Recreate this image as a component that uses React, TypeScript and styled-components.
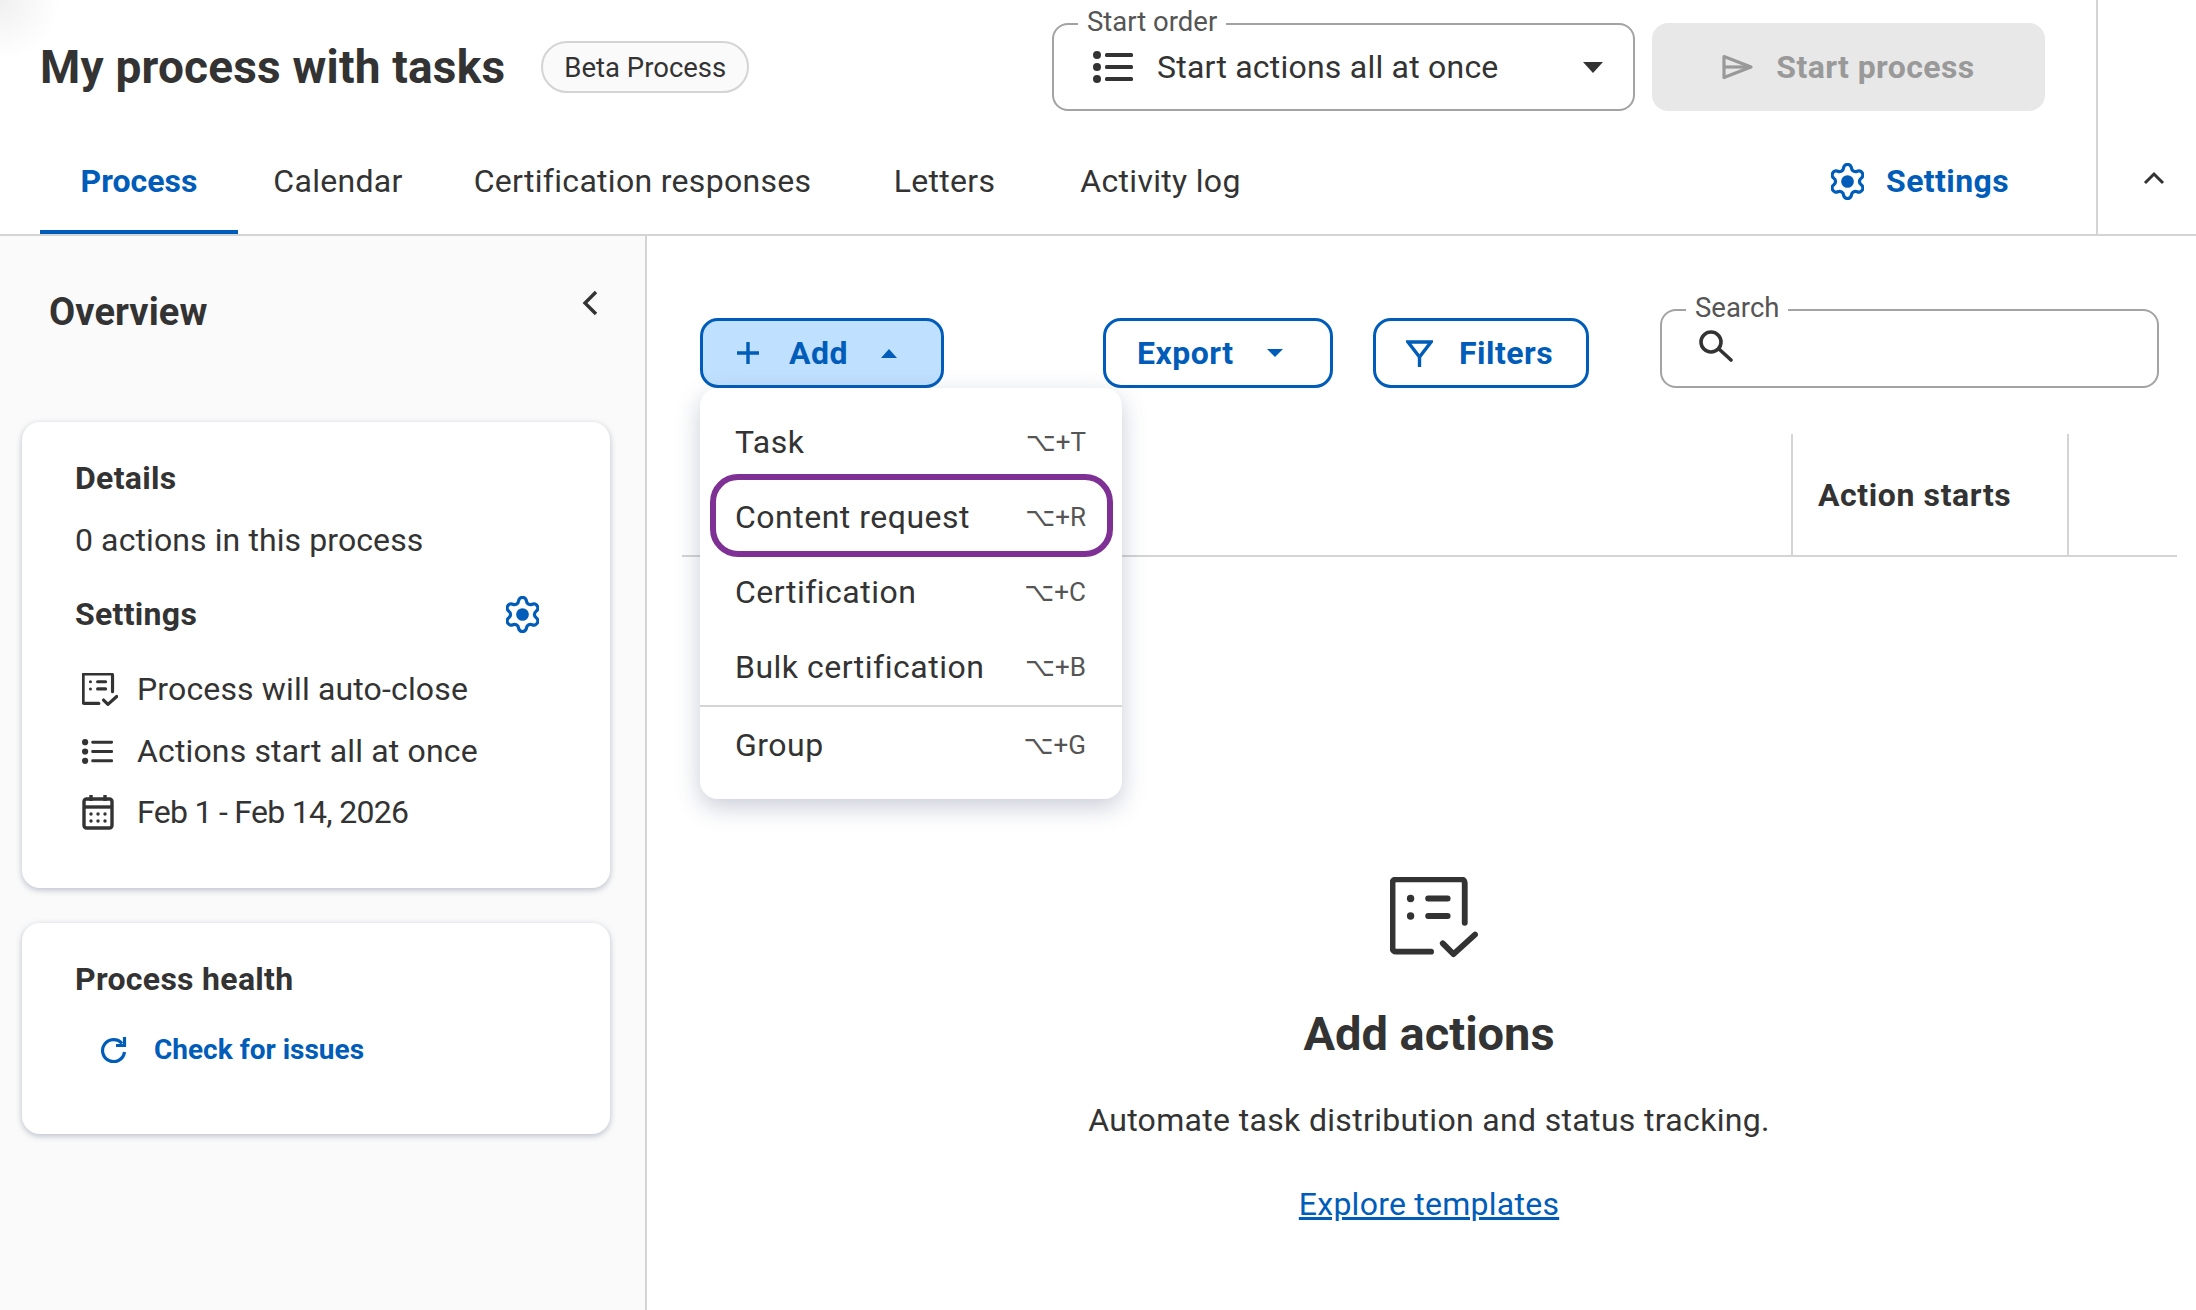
import { createGlobalStyle, styled } from "styled-components";

const BLUE = "#005cb9";
const INK = "#333333";

const GlobalStyle = createGlobalStyle`
  html, body {
    margin: 0;
    padding: 0;
    background: #fff;
  }
  body {
    font-family: Roboto, "Noto Sans", "DejaVu Sans", sans-serif;
    color: ${INK};
  }
  * {
    box-sizing: border-box;
  }
`;

const GearIcon = () => (
  <svg width="33" height="37" viewBox="2.4 1.2 19.2 21.6" fill="none" stroke={BLUE} strokeWidth="1.9" strokeLinejoin="round">
    <path d="M9.671 4.136a2.34 2.34 0 0 1 4.659 0 2.34 2.34 0 0 0 3.319 1.915 2.34 2.34 0 0 1 2.33 4.033 2.34 2.34 0 0 0 0 3.831 2.34 2.34 0 0 1-2.33 4.033 2.34 2.34 0 0 0-3.319 1.915 2.34 2.34 0 0 1-4.659 0 2.34 2.34 0 0 0-3.32-1.915 2.34 2.34 0 0 1-2.33-4.033 2.34 2.34 0 0 0 0-3.831A2.34 2.34 0 0 1 6.35 6.051a2.34 2.34 0 0 0 3.319-1.915" />
    <circle cx="12" cy="12" r="3.7" fill={BLUE} stroke="none" />
  </svg>
);

const ListIcon = ({ width, height }: { width: number; height: number }) => (
  <svg width={width} height={height} viewBox="0 0 40 32" fill={INK}>
    <circle cx="4" cy="4" r="4" />
    <circle cx="4" cy="16" r="4" />
    <circle cx="4" cy="28" r="4" />
    <rect x="12" y="2" width="28" height="4" rx="1.5" />
    <rect x="12" y="14" width="28" height="4" rx="1.5" />
    <rect x="12" y="26" width="28" height="4" rx="1.5" />
  </svg>
);

const TaskListIcon = ({ width, height, strokeWidth }: { width: number; height: number; strokeWidth: number }) => (
  <svg width={width} height={height} viewBox="0 0 90 83" fill="none" stroke={INK} strokeWidth={strokeWidth} strokeLinecap="round" strokeLinejoin="round">
    <path d="M42 76.5 H6 a3.5 3.5 0 0 1 -3.5 -3.5 V6 a3.5 3.5 0 0 1 3.5 -3.5 H73 a3.5 3.5 0 0 1 3.5 3.5 V47" />
    <path d="M54 68 L65 79 L87 59" />
    <path d="M39 22 H59 M39 40 H59" />
    <circle cx="21" cy="22" r="3.8" fill={INK} stroke="none" />
    <circle cx="21" cy="40" r="3.8" fill={INK} stroke="none" />
  </svg>
);

const CalendarIcon = () => (
  <svg width="32" height="36" viewBox="0 0 32 36" fill="none" stroke={INK} strokeWidth="3.4">
    <rect x="2" y="5" width="28" height="29" rx="2.5" />
    <path d="M2 13 H30" />
    <path d="M9 1 V7 M23 1 V7" />
    <g fill={INK} stroke="none">
      <circle cx="9" cy="20" r="1.7" />
      <circle cx="16" cy="20" r="1.7" />
      <circle cx="23" cy="20" r="1.7" />
      <circle cx="9" cy="27" r="1.7" />
      <circle cx="16" cy="27" r="1.7" />
      <circle cx="23" cy="27" r="1.7" />
    </g>
  </svg>
);

const SendIcon = () => (
  <svg width="32" height="26" viewBox="0 0 32 26" fill="none" stroke="#999" strokeWidth="3.2" strokeLinejoin="round">
    <path d="M2 2.5 L29 13 L2 23.5 Z" />
    <path d="M3 13 H29" />
  </svg>
);

const FilterIcon = () => (
  <svg width="27" height="27" viewBox="0 0 27 27" fill="none" stroke={BLUE} strokeWidth="3.4" strokeLinejoin="miter">
    <path d="M2 2 H25 L13.5 17 Z" />
    <path d="M13.5 16 V27" />
  </svg>
);

const SearchIcon = () => (
  <svg width="34" height="32" viewBox="0 0 34 32" fill="none" stroke={INK} strokeWidth="3.6" strokeLinecap="round">
    <circle cx="12" cy="12" r="10" />
    <path d="M20 19 L32 30" />
  </svg>
);

const RefreshIcon = () => (
  <svg width="28" height="27" viewBox="0 0 28 27" fill="none" stroke={BLUE} strokeWidth="3.2">
    <path d="M22 7.5 A11 11 0 1 0 24.5 16" />
    <path d="M24.5 1 V9.5 H16" />
  </svg>
);

const PlusIcon = () => (
  <svg width="22" height="22" viewBox="0 0 22 22" stroke={BLUE} strokeWidth="3.4">
    <path d="M11 0 V22 M0 11 H22" />
  </svg>
);

const Caret = styled.span<{ $up?: boolean; $color?: string; $width?: number }>`
  display: inline-block;
  width: 0;
  height: 0;
  border-left: ${(p) => (p.$width ?? 18) / 2}px solid transparent;
  border-right: ${(p) => (p.$width ?? 18) / 2}px solid transparent;
  ${(p) => (p.$up ? "border-bottom" : "border-top")}: ${(p) => ((p.$width ?? 18) * 5) / 9}px solid ${(p) => p.$color ?? BLUE};
`;

const Gap = styled.span<{ $width: number }>`
  flex: none;
  width: ${(p) => p.$width}px;
`;

const Page = styled.div`
  width: 2196px;
  height: 1310px;
  display: flex;
  flex-direction: column;
  overflow: hidden;
  background: radial-gradient(circle at 0 0, #f0f0f0 0, #ffffff 60px);
`;

const Header = styled.header`
  height: 236px;
  flex: none;
  display: flex;
  border-bottom: 2px solid #d4d4d4;
`;

const HeaderMain = styled.div`
  width: 2098px;
  border-right: 2px solid #d4d4d4;
  display: flex;
  flex-direction: column;
  padding-left: 40px;
`;

const CollapseCell = styled.div`
  flex: 1;
  display: flex;
  justify-content: center;
  padding-top: 171px;
  padding-left: 14px;
`;

const TitleRow = styled.div`
  height: 136px;
  display: flex;
  align-items: flex-start;
  padding-right: 51px;
  padding-top: 23px;
`;

const Title = styled.h1`
  margin: 0;
  height: 88px;
  display: flex;
  align-items: center;
  font-size: 46px;
  letter-spacing: 0.2px;
  font-weight: 700;
  color: ${INK};
`;

const Pill = styled.span`
  margin: 18px 0 0 36px;
  height: 52px;
  width: 208px;
  display: flex;
  align-items: center;
  justify-content: center;
  border: 2px solid #d4d4d4;
  border-radius: 26px;
  background: #fafafa;
  font-size: 27.5px;
`;

const OutlinedField = styled.div<{ $width: number; $height: number; $left?: number }>`
  position: relative;
  flex: none;
  width: ${(p) => p.$width}px;
  height: ${(p) => p.$height}px;
  margin-left: ${(p) => p.$left ?? 0}px;
  border: 2px solid #a3a3a3;
  border-radius: 16px;
  background: #fff;
  display: flex;
  align-items: center;
`;

const FieldLabel = styled.label`
  position: absolute;
  top: -17px;
  left: 24px;
  padding: 0 9px;
  background: #fff;
  font-size: 27.5px;
  line-height: 28px;
  color: #555;
`;

const SelectValue = styled.div`
  flex: 1;
  display: flex;
  align-items: center;
  padding: 0 30px 0 39px;
  font-size: 32px;
  letter-spacing: 0.22px;
  svg {
    margin-right: 24px;
  }
  span:last-child {
    margin-left: auto;
  }
`;

const SearchAdornment = styled.span`
  display: flex;
  margin: -6px 0 0 37px;
`;

const StartButton = styled.button`
  margin-left: 17px;
  width: 393px;
  height: 88px;
  padding: 0;
  border: none;
  border-radius: 16px;
  background: #e8e8e8;
  color: #999;
  font: 700 32px Roboto, sans-serif;
  letter-spacing: 0.4px;
  display: flex;
  align-items: center;
  justify-content: center;
  gap: 22px;
`;

const Spacer = styled.div`
  flex: 1;
`;

const TabRow = styled.nav`
  flex: 1;
  display: flex;
  padding-right: 87px;
`;

const Tab = styled.a<{ $active?: boolean; $width: number }>`
  width: ${(p) => p.$width}px;
  display: flex;
  align-items: center;
  justify-content: center;
  padding-bottom: 4px;
  font-size: 32px;
  font-weight: ${(p) => (p.$active ? 700 : 400)};
  letter-spacing: ${(p) => (p.$active ? 0 : 0.3)}px;
  color: ${(p) => (p.$active ? BLUE : INK)};
  border-bottom: 4px solid ${(p) => (p.$active ? BLUE : "transparent")};
`;

const SettingsLink = styled.a`
  display: flex;
  align-items: center;
  gap: 22px;
  padding-bottom: 8px;
  font-size: 32px;
  letter-spacing: 0.4px;
  font-weight: 700;
  color: ${BLUE};
`;

const Body = styled.div`
  flex: 1;
  display: flex;
  min-height: 0;
`;

const Sidebar = styled.aside`
  width: 647px;
  flex: none;
  background: #fafafa;
  border-right: 2px solid #d4d4d4;
  padding: 0 35px 0 22px;
`;

const OverviewHead = styled.div`
  height: 186px;
  display: flex;
  align-items: flex-start;
  justify-content: space-between;
  padding: 54px 12px 0 27px;
  font-size: 38px;
  letter-spacing: 0.1px;
  font-weight: 700;
  color: ${INK};
`;

const Card = styled.section<{ $height: number }>`
  height: ${(p) => p.$height}px;
  margin-bottom: 35px;
  padding: 34px 53px 0;
  background: #fff;
  border-radius: 18px;
  box-shadow: 0 2px 6px rgba(90, 100, 130, 0.4);
`;

const CardTitle = styled.div<{ $top?: number }>`
  display: flex;
  align-items: center;
  justify-content: space-between;
  height: 44px;
  margin-top: ${(p) => p.$top ?? 0}px;
  font-size: 32px;
  letter-spacing: 0.3px;
  font-weight: 700;
  padding-right: 18px;
`;

const CardText = styled.div`
  height: 44px;
  margin-top: 18px;
  display: flex;
  align-items: center;
  font-size: 32px;
  letter-spacing: 0.1px;
`;

const MetaRow = styled.div<{ $top: number; $tight?: boolean }>`
  height: 44px;
  margin-top: ${(p) => p.$top}px;
  display: flex;
  align-items: center;
  font-size: 32px;
  letter-spacing: ${(p) => (p.$tight ? -0.7 : 0.15)}px;
`;

const MetaIcon = styled.span`
  width: 62px;
  padding-left: 7px;
  display: flex;
  align-items: center;
  flex: none;
`;

const CheckLink = styled.a`
  margin: 32px 0 0 25px;
  display: flex;
  align-items: center;
  gap: 26px;
  font-size: 28px;
  font-weight: 700;
  color: ${BLUE};
`;

const Main = styled.main`
  flex: 1;
  padding-left: 35px;
`;

const Toolbar = styled.div`
  margin-top: 73px;
  height: 79px;
  display: flex;
  align-items: flex-end;
  padding-left: 18px;
`;

const AddWrap = styled.div`
  position: relative;
`;

const ToolButton = styled.button<{ $pressed?: boolean; $width: number; $left?: number; $pad: number }>`
  flex: none;
  width: ${(p) => p.$width}px;
  height: 70px;
  margin-left: ${(p) => p.$left ?? 0}px;
  padding: 0 0 0 ${(p) => p.$pad}px;
  border: 3px solid ${BLUE};
  border-radius: 18px;
  background: ${(p) => (p.$pressed ? "#c0e0ff" : "#fff")};
  color: ${BLUE};
  font: 700 32px Roboto, sans-serif;
  letter-spacing: 0.5px;
  display: flex;
  align-items: center;
`;

const Menu = styled.div`
  position: absolute;
  top: 70px;
  left: 0;
  z-index: 2;
  width: 422px;
  padding: 16px 0 17px;
  background: #fff;
  border-radius: 18px;
  box-shadow: 0 8px 24px rgba(60, 75, 110, 0.28);
`;

const MenuItem = styled.div<{ $highlight?: boolean }>`
  position: relative;
  height: 75px;
  display: flex;
  align-items: center;
  justify-content: space-between;
  padding: 0 36px 0 35px;
  font-size: 32px;
  letter-spacing: 0.5px;
  ${(p) =>
    p.$highlight &&
    `&::after {
      content: "";
      position: absolute;
      inset: -5px 9px -3px 10px;
      border: 6px solid #7f3095;
      border-radius: 28px;
    }`}
`;

const Shortcut = styled.span`
  font-size: 26px;
  letter-spacing: 0;
  color: #555;
  font-family: Roboto, "DejaVu Sans", sans-serif;
`;

const MenuDivider = styled.div`
  height: 2px;
  margin-top: 1px;
  background: #d4d4d4;
`;

const TableHead = styled.div`
  margin-top: 46px;
  width: 1495px;
  height: 123px;
  display: flex;
  justify-content: flex-end;
  border-bottom: 2px solid #d4d4d4;
  padding-right: 108px;
`;

const HeadCell = styled.div`
  width: 278px;
  display: flex;
  align-items: center;
  padding-left: 25px;
  border-left: 2px solid #d4d4d4;
  border-right: 2px solid #d4d4d4;
  font-size: 32px;
  letter-spacing: 0.6px;
  font-weight: 700;
`;

const EmptyState = styled.div`
  width: 1494px;
  padding-top: 320px;
  display: flex;
  flex-direction: column;
  align-items: center;
  text-align: center;
`;

const EmptyIconSlot = styled.div`
  height: 83px;
  padding-left: 10px;
`;

const EmptyTitle = styled.h2`
  margin: 46px 0 0;
  font-size: 47px;
  line-height: 56px;
  font-weight: 700;
`;

const EmptyText = styled.p`
  margin: 36px 0 0;
  font-size: 32px;
  letter-spacing: 0.33px;
  line-height: 44px;
`;

const ExploreLink = styled.a`
  margin-top: 40px;
  font-size: 32px;
  letter-spacing: 0.25px;
  line-height: 44px;
  color: ${BLUE};
  text-decoration: underline;
`;

const tabs = [
  { label: "Process", width: 198, active: true },
  { label: "Calendar", width: 200 },
  { label: "Certification responses", width: 409 },
  { label: "Letters", width: 195 },
  { label: "Activity log", width: 237 },
];

const menuItems = [
  { label: "Task", key: "T" },
  { label: "Content request", key: "R", highlight: true },
  { label: "Certification", key: "C" },
  { label: "Bulk certification", key: "B" },
];

const App = () => {
  return (
    <Page>
      <GlobalStyle />
      <Header>
        <HeaderMain>
          <TitleRow>
            <Title>My process with tasks</Title>
            <Pill>Beta Process</Pill>
            <Spacer />
            <OutlinedField $width={583} $height={88}>
              <FieldLabel>Start order</FieldLabel>
              <SelectValue>
                <ListIcon width={40} height={32} />
                Start actions all at once
                <Caret $color={INK} $width={20} />
              </SelectValue>
            </OutlinedField>
            <StartButton>
              <SendIcon />
              Start process
            </StartButton>
          </TitleRow>
          <TabRow>
            {tabs.map((tab) => (
              <Tab key={tab.label} $active={tab.active} $width={tab.width}>
                {tab.label}
              </Tab>
            ))}
            <Spacer />
            <SettingsLink>
              <GearIcon />
              Settings
            </SettingsLink>
          </TabRow>
        </HeaderMain>
        <CollapseCell>
          <svg width="22" height="14" viewBox="0 0 22 14" fill="none" stroke={INK} strokeWidth="3">
            <path d="M2 12 L11 3 L20 12" />
          </svg>
        </CollapseCell>
      </Header>
      <Body>
        <Sidebar>
          <OverviewHead>
            Overview
            <svg width="16" height="26" viewBox="0 0 16 26" fill="none" stroke={INK} strokeWidth="3.4">
              <path d="M14 2 L3 13 L14 24" />
            </svg>
          </OverviewHead>
          <Card $height={466}>
            <CardTitle>Details</CardTitle>
            <CardText>0 actions in this process</CardText>
            <CardTitle $top={30}>
              Settings
              <GearIcon />
            </CardTitle>
            <MetaRow $top={31}>
              <MetaIcon>
                <TaskListIcon width={36} height={33} strokeWidth={8} />
              </MetaIcon>
              Process will auto-close
            </MetaRow>
            <MetaRow $top={18}>
              <MetaIcon>
                <ListIcon width={31} height={25} />
              </MetaIcon>
              Actions start all at once
            </MetaRow>
            <MetaRow $top={17} $tight>
              <MetaIcon>
                <CalendarIcon />
              </MetaIcon>
              Feb 1 - Feb 14, 2026
            </MetaRow>
          </Card>
          <Card $height={211}>
            <CardTitle>Process health</CardTitle>
            <CheckLink>
              <RefreshIcon />
              Check for issues
            </CheckLink>
          </Card>
        </Sidebar>
        <Main>
          <Toolbar>
            <AddWrap>
              <ToolButton $pressed $width={244} $pad={34}>
                <PlusIcon />
                <Gap $width={30} />
                Add
                <Gap $width={33} />
                <Caret $up $width={17} />
              </ToolButton>
              <Menu>
                {menuItems.map((item) => (
                  <MenuItem key={item.label} $highlight={item.highlight}>
                    {item.label}
                    <Shortcut>⌥+{item.key}</Shortcut>
                  </MenuItem>
                ))}
                <MenuDivider />
                <MenuItem>
                  Group
                  <Shortcut>⌥+G</Shortcut>
                </MenuItem>
              </Menu>
            </AddWrap>
            <ToolButton $width={230} $left={159} $pad={31}>
              Export
              <Gap $width={33} />
              <Caret $width={16} />
            </ToolButton>
            <ToolButton $width={216} $left={40} $pad={30}>
              <FilterIcon />
              <Gap $width={26} />
              Filters
            </ToolButton>
            <OutlinedField $width={499} $height={79} $left={71}>
              <FieldLabel>Search</FieldLabel>
              <SearchAdornment>
                <SearchIcon />
              </SearchAdornment>
            </OutlinedField>
          </Toolbar>
          <TableHead>
            <HeadCell>Action starts</HeadCell>
          </TableHead>
          <EmptyState>
            <EmptyIconSlot>
              <TaskListIcon width={88} height={81} strokeWidth={6} />
            </EmptyIconSlot>
            <EmptyTitle>Add actions</EmptyTitle>
            <EmptyText>Automate task distribution and status tracking.</EmptyText>
            <ExploreLink>Explore templates</ExploreLink>
          </EmptyState>
        </Main>
      </Body>
    </Page>
  );
};

export default App;
